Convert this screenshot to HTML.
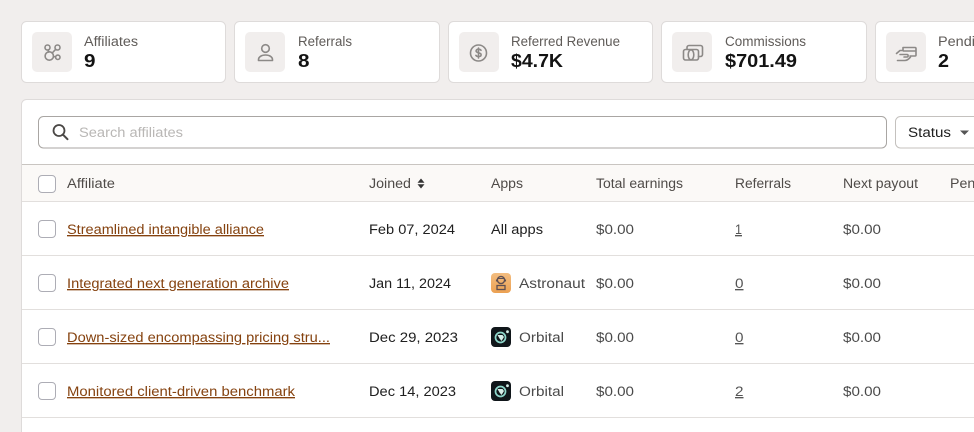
<!DOCTYPE html>
<html><head><meta charset="utf-8"><style>
html,body{margin:0;padding:0;width:974px;height:432px;overflow:hidden;background:#f1eeed}
svg{display:block}
text{font-family:"Liberation Sans",sans-serif;font-size:13.5px;fill:#202020}
.l{fill:#5f5b58}
.v{font-size:18px;font-weight:700;fill:#131313}
.h{fill:#4f4b48}
.a{fill:#85420f;text-decoration:underline}
.g{fill:#4a4a4a}
.n{fill:#555;text-decoration:underline}
.i{fill:none;stroke:#8c8987;stroke-width:1.6;stroke-linecap:round;stroke-linejoin:round}
.c{fill:#fff;stroke:#adadb5;stroke-width:1}
</style></head><body>
<svg width="974" height="432" viewBox="0 0 974 432" xmlns="http://www.w3.org/2000/svg">
<rect width="974" height="432" fill="#f1eeed"/>
<g fill="#fff" stroke="#dedbda">
<rect x="21.500" y="21.500" width="204" height="61" rx="5"/>
<rect x="234.500" y="21.500" width="205" height="61" rx="5"/>
<rect x="448.500" y="21.500" width="204" height="61" rx="5"/>
<rect x="661.500" y="21.500" width="205" height="61" rx="5"/>
<rect x="875.500" y="21.500" width="110" height="61" rx="5"/>
</g>
<g fill="#f1eeed">
<rect x="32" y="32" width="40" height="40" rx="5"/>
<rect x="245" y="32" width="40" height="40" rx="5"/>
<rect x="459" y="32" width="40" height="40" rx="5"/>
<rect x="672" y="32" width="40" height="40" rx="5"/>
<rect x="886" y="32" width="40" height="40" rx="5"/>
</g>
<!-- affiliates icon -->
<g class="i">
<circle cx="47.500" cy="47.500" r="2.500"/><circle cx="57.500" cy="47.500" r="2.500"/><circle cx="49.300" cy="56" r="4.200"/><circle cx="57.800" cy="57.300" r="2.200"/>
<path d="M48.200 50l.5 2M55.700 49.300l-3.500 3.700M53.500 56.500l2.100.4"/>
</g>
<!-- referrals icon -->
<g class="i">
<circle cx="265.500" cy="48.500" r="3.800"/>
<path d="M258.500 60.500v-.8c0-2.800 3-4.700 7-4.700s7 1.900 7 4.700v.8z"/>
</g>
<!-- revenue icon -->
<g class="i">
<circle cx="478.500" cy="53" r="8"/>
<path d="M481 50.300c-.5-.7-1.400-1.100-2.500-1.100-1.400 0-2.400.7-2.400 1.800 0 2.400 5 1.200 5 3.700 0 1.100-1 1.800-2.600 1.800-1.100 0-2.100-.4-2.600-1.100M478.500 48v10"/>
</g>
<!-- commissions icon -->
<g class="i">
<rect x="683.500" y="49.500" width="15" height="10.500" rx="2"/>
<path d="M687 49v-1.500a2 2 0 0 1 2-2h11.500a2 2 0 0 1 2 2v7a2 2 0 0 1-2 2h-2"/>
<ellipse cx="691" cy="54.800" rx="2.800" ry="5"/>
</g>
<!-- pending icon -->
<g class="i">
<path d="M903 47.500h12a1 1 0 0 1 1 1v6.500a1 1 0 0 1-1 1h-5M903 47.500v3M903.500 51h12.500"/>
<path d="M896.500 53.500l3.500-3h3M900 54.500h7c1.500 0 1.500 2.500 0 2.500h-3"/>
<path d="M897.500 60.500h7c3 0 4.500-1.500 6-3.500"/>
</g>
<text x="84" y="46" class="l" textLength="54" lengthAdjust="spacingAndGlyphs">Affiliates</text>
<text x="84" y="67" class="v" textLength="11.500" lengthAdjust="spacingAndGlyphs">9</text>
<text x="298" y="46" class="l" textLength="54" lengthAdjust="spacingAndGlyphs">Referrals</text>
<text x="298" y="67" class="v" textLength="11.500" lengthAdjust="spacingAndGlyphs">8</text>
<text x="511" y="46" class="l" textLength="109" lengthAdjust="spacingAndGlyphs">Referred Revenue</text>
<text x="511" y="67" class="v" textLength="52" lengthAdjust="spacingAndGlyphs">$4.7K</text>
<text x="725" y="46" class="l" textLength="81" lengthAdjust="spacingAndGlyphs">Commissions</text>
<text x="725" y="67" class="v" textLength="72" lengthAdjust="spacingAndGlyphs">$701.49</text>
<text x="938" y="46" class="l" textLength="53" lengthAdjust="spacingAndGlyphs">Pending</text>
<text x="938" y="67" class="v" textLength="11" lengthAdjust="spacingAndGlyphs">2</text>

<!-- panel -->
<rect x="21.500" y="99.500" width="980" height="400" rx="5" fill="#fff" stroke="#dedbda"/>
<rect x="38.500" y="116.500" width="848" height="31.500" rx="5" fill="#fff" stroke="#a9a6a3"/>
<circle cx="59" cy="130.500" r="5.500" fill="none" stroke="#4a4745" stroke-width="1.800"/>
<path d="M63 134.700l4.500 4.500" stroke="#4a4745" stroke-width="2" stroke-linecap="round"/>
<text x="79" y="137" style="fill:#b9b7b5" textLength="104" lengthAdjust="spacingAndGlyphs">Search affiliates</text>
<rect x="895.500" y="116.500" width="100" height="31.500" rx="5" fill="#fff" stroke="#c4c1be"/>
<text x="908" y="137" textLength="43" lengthAdjust="spacingAndGlyphs">Status</text>
<path d="M960 130.500h9l-4.500 4.500z" fill="#555"/>

<!-- header -->
<rect x="22" y="165" width="952" height="36" fill="#fbf9f7"/>
<rect x="22" y="164" width="952" height="1" fill="#c9c5c1"/>
<rect x="22" y="201" width="952" height="1" fill="#e2dfdd"/>
<rect x="22" y="255" width="952" height="1" fill="#e2dfdd"/>
<rect x="22" y="309" width="952" height="1" fill="#e2dfdd"/>
<rect x="22" y="363" width="952" height="1" fill="#e2dfdd"/>
<rect x="22" y="417" width="952" height="1" fill="#e2dfdd"/>

<rect x="38.500" y="175.500" width="17" height="17" rx="3.500" class="c"/>
<rect x="38.500" y="220.500" width="17" height="17" rx="3.500" class="c"/>
<rect x="38.500" y="274.500" width="17" height="17" rx="3.500" class="c"/>
<rect x="38.500" y="328.500" width="17" height="17" rx="3.500" class="c"/>
<rect x="38.500" y="382.500" width="17" height="17" rx="3.500" class="c"/>

<text x="67" y="188" class="h" textLength="48" lengthAdjust="spacingAndGlyphs">Affiliate</text>
<text x="369" y="188" class="h" textLength="42" lengthAdjust="spacingAndGlyphs">Joined</text>
<path d="M417.500 182.700l3.500-4.200 3.500 4.200zM417.500 184.300h7l-3.500 4.200z" fill="#333"/>
<text x="491" y="188" class="h" textLength="32" lengthAdjust="spacingAndGlyphs">Apps</text>
<text x="596" y="188" class="h" textLength="87" lengthAdjust="spacingAndGlyphs">Total earnings</text>
<text x="735" y="188" class="h" textLength="56" lengthAdjust="spacingAndGlyphs">Referrals</text>
<text x="843" y="188" class="h" textLength="75" lengthAdjust="spacingAndGlyphs">Next payout</text>
<text x="950" y="188" class="h" textLength="52" lengthAdjust="spacingAndGlyphs">Pending</text>

<!-- rows -->
<text x="67" y="234" class="a" textLength="197" lengthAdjust="spacingAndGlyphs">Streamlined intangible alliance</text>
<text x="67" y="288" class="a" textLength="222" lengthAdjust="spacingAndGlyphs">Integrated next generation archive</text>
<text x="67" y="342" class="a" textLength="263" lengthAdjust="spacingAndGlyphs">Down-sized encompassing pricing stru...</text>
<text x="67" y="396" class="a" textLength="228" lengthAdjust="spacingAndGlyphs">Monitored client-driven benchmark</text>

<text x="369" y="234" textLength="86" lengthAdjust="spacingAndGlyphs">Feb 07, 2024</text>
<text x="369" y="288" textLength="82" lengthAdjust="spacingAndGlyphs">Jan 11, 2024</text>
<text x="369" y="342" textLength="89" lengthAdjust="spacingAndGlyphs">Dec 29, 2023</text>
<text x="369" y="396" textLength="87" lengthAdjust="spacingAndGlyphs">Dec 14, 2023</text>

<text x="491" y="234" textLength="52" lengthAdjust="spacingAndGlyphs">All apps</text>
<defs><linearGradient id="o" x1="0" y1="0" x2="0" y2="1"><stop offset="0" stop-color="#f3bd80"/><stop offset="1" stop-color="#eca152"/></linearGradient></defs>
<rect x="491" y="273" width="20" height="20" rx="4" fill="url(#o)"/>
<circle cx="501" cy="280" r="3.600" fill="none" stroke="#5e4f52" stroke-width="1.400"/>
<path d="M496.600 279.500v2M505.400 279.500v2" stroke="#5e4f52" stroke-width="1.300"/>
<path d="M498 278.500h6" stroke="#5e4f52" stroke-width="1"/>
<rect x="497" y="285.500" width="8" height="4" fill="none" stroke="#5e4f52" stroke-width="1.300"/>
<text x="519" y="288" class="g" textLength="66" lengthAdjust="spacingAndGlyphs">Astronaut</text>

<rect x="491" y="327" width="20" height="20" rx="4" fill="#10161a"/>
<circle cx="500.500" cy="337.500" r="5" fill="none" stroke="#8fd8cc" stroke-width="1.700"/>
<path d="M497.500 335h5l1.500 2-2.500 4-2-2.500z" fill="#d7efe9"/>
<circle cx="507.500" cy="331.700" r="1.400" fill="#d8f2ec"/>
<text x="519" y="342" class="g" textLength="45" lengthAdjust="spacingAndGlyphs">Orbital</text>

<rect x="491" y="381" width="20" height="20" rx="4" fill="#10161a"/>
<circle cx="500.500" cy="391.500" r="5" fill="none" stroke="#8fd8cc" stroke-width="1.700"/>
<path d="M497.500 389h5l1.500 2-2.500 4-2-2.500z" fill="#d7efe9"/>
<circle cx="507.500" cy="385.700" r="1.400" fill="#d8f2ec"/>
<text x="519" y="396" class="g" textLength="45" lengthAdjust="spacingAndGlyphs">Orbital</text>

<text x="596" y="234" class="g" textLength="38" lengthAdjust="spacingAndGlyphs">$0.00</text>
<text x="596" y="288" class="g" textLength="38" lengthAdjust="spacingAndGlyphs">$0.00</text>
<text x="596" y="342" class="g" textLength="38" lengthAdjust="spacingAndGlyphs">$0.00</text>
<text x="596" y="396" class="g" textLength="38" lengthAdjust="spacingAndGlyphs">$0.00</text>
<text x="843" y="234" class="g" textLength="38" lengthAdjust="spacingAndGlyphs">$0.00</text>
<text x="843" y="288" class="g" textLength="38" lengthAdjust="spacingAndGlyphs">$0.00</text>
<text x="843" y="342" class="g" textLength="38" lengthAdjust="spacingAndGlyphs">$0.00</text>
<text x="843" y="396" class="g" textLength="38" lengthAdjust="spacingAndGlyphs">$0.00</text>
<text x="735" y="234" class="n" textLength="7" lengthAdjust="spacingAndGlyphs">1</text>
<text x="735" y="288" class="n" textLength="8.500" lengthAdjust="spacingAndGlyphs">0</text>
<text x="735" y="342" class="n" textLength="8.500" lengthAdjust="spacingAndGlyphs">0</text>
<text x="735" y="396" class="n" textLength="8.500" lengthAdjust="spacingAndGlyphs">2</text>
</svg>
</body></html>
